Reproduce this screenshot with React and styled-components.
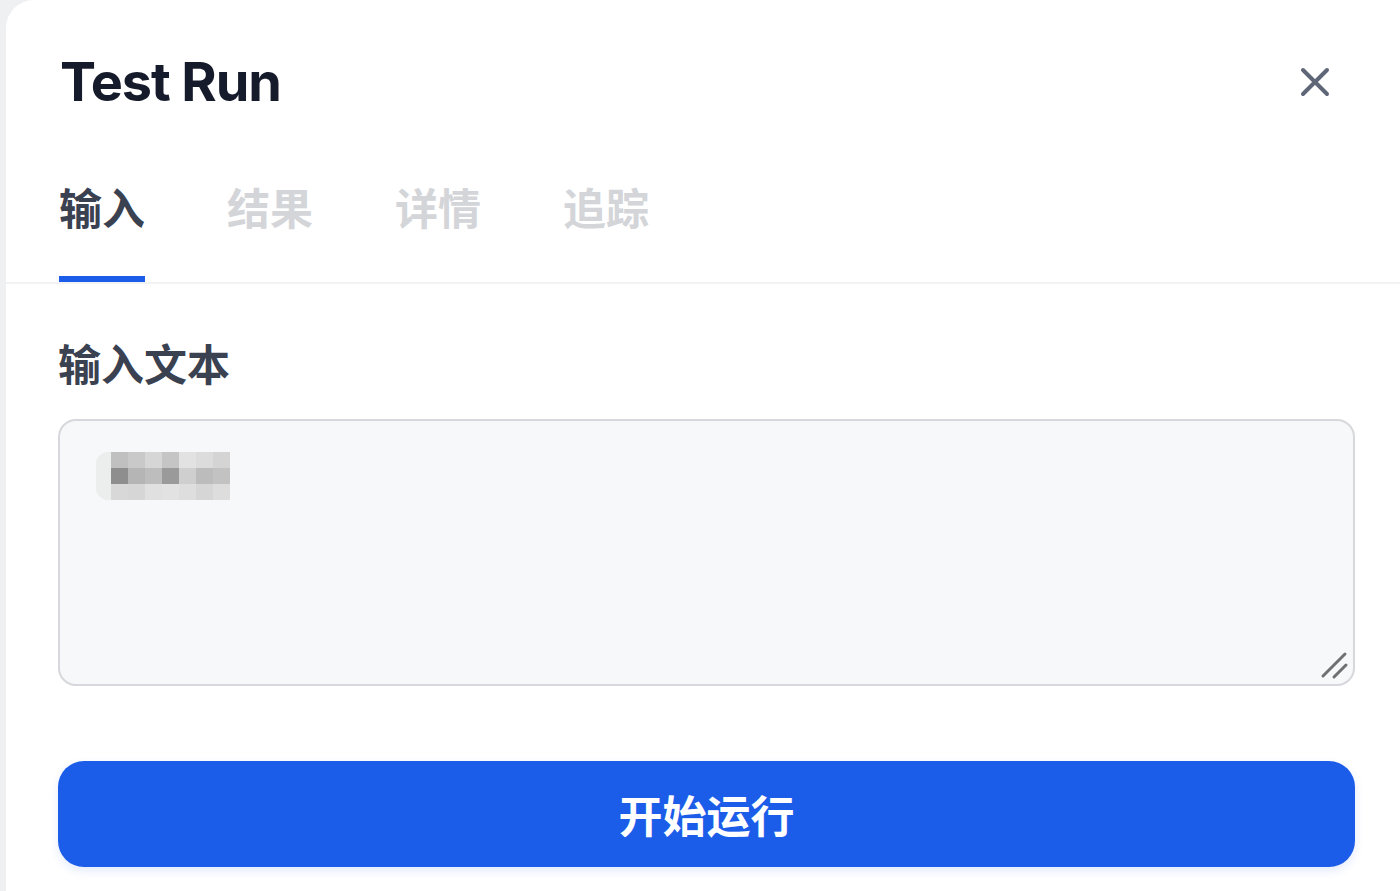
import React from "react";
import styled, { createGlobalStyle } from "styled-components";

const GlobalStyle = createGlobalStyle`
  html, body {
    margin: 0;
    padding: 0;
    background: #eef0f2;
  }
  * {
    box-sizing: border-box;
  }
`;

const Page = styled.div`
  display: flex;
  min-height: 100vh;
  padding-left: 6px;
  background: #eef0f2;
  overflow: hidden;
`;

const Panel = styled.div`
  flex: 1;
  display: flex;
  flex-direction: column;
  background: #ffffff;
  border-top-left-radius: 28px;
  font-family: Inter, "Noto Sans CJK SC", sans-serif;
`;

const Header = styled.div`
  display: flex;
  justify-content: space-between;
  align-items: center;
  padding: 48px 70px 0 54px;
`;

const Title = styled.h1`
  margin: 0;
  font-family: Inter, "Noto Sans CJK SC", sans-serif;
  font-size: 54px;
  line-height: 68px;
  font-weight: 700;
  color: #161b2b;
  letter-spacing: -1.1px;
`;

const CloseButton = styled.button`
  display: flex;
  align-items: center;
  justify-content: center;
  padding: 0;
  border: none;
  background: none;
  color: #5f6677;
  cursor: pointer;
`;

const TabBar = styled.div`
  display: flex;
  gap: 82px;
  padding: 0 53px;
  margin-top: 58px;
  border-bottom: 2px solid #f2f3f5;
`;

const Tab = styled.div`
  font-family: "Noto Sans CJK SC", sans-serif;
  font-size: 43px;
  line-height: 64px;
  font-weight: 700;
  color: ${(p) => (p.$active ? "#3a4150" : "#d3d5d9")};
  padding-bottom: 38px;
  border-bottom: 6px solid ${(p) => (p.$active ? "#1b5de9" : "transparent")};
`;

const Body = styled.div`
  display: flex;
  flex-direction: column;
  padding: 0 45px 0 52px;
`;

const Label = styled.div`
  margin-top: 46px;
  font-family: "Noto Sans CJK SC", sans-serif;
  font-size: 43px;
  line-height: 64px;
  font-weight: 700;
  color: #3a4150;
`;

const Field = styled.div`
  position: relative;
  margin-top: 25px;
  height: 267px;
  padding: 31px 36px;
  background: #f7f8f9;
  border: 2px solid #d6d8dc;
  border-radius: 18px;
`;

const Mosaic = styled.div`
  display: flex;
  align-items: center;
`;

const MosaicCap = styled.div`
  width: 15px;
  height: 48px;
  background: #eceded;
  border-radius: 12px 0 0 12px;
`;

const MosaicGrid = styled.div`
  display: grid;
  grid-template-columns: repeat(7, 17px);
  grid-auto-rows: 16px;
`;

const Cell = styled.div`
  background: ${(p) => p.$tone};
`;

const Grip = styled.svg`
  position: absolute;
  right: 4px;
  bottom: 4px;
`;

const RunButton = styled.button`
  margin-top: 75px;
  height: 106px;
  border: none;
  border-radius: 26px;
  background: #1b5de9;
  color: #ffffff;
  font-family: "Noto Sans CJK SC", sans-serif;
  font-size: 44px;
  font-weight: 700;
  box-shadow: 0 4px 10px rgba(27, 93, 233, 0.12);
  cursor: pointer;
`;

const tabs = ["输入", "结果", "详情", "追踪"];

const mosaic = [
  ["#c0c0c0", "#c9c9c9", "#d6d6d6", "#c5c5c5", "#e2e2e2", "#dcdcdc", "#d4d4d4"],
  ["#8e8e8e", "#b5b5b5", "#bdbdbd", "#9a9a9a", "#cfcfcf", "#bcbcbc", "#c2c2c2"],
  ["#d8d8d8", "#d6d6d6", "#e0e0e0", "#e2e2e2", "#dedede", "#d6d6d6", "#dddddd"],
];

export default function App() {
  return (
    <>
      <GlobalStyle />
      <Page>
        <Panel>
          <Header>
            <Title>Test Run</Title>
            <CloseButton aria-label="close">
              <svg width="30" height="30" viewBox="0 0 30 30" fill="none">
                <path
                  d="M3 3L27 27M27 3L3 27"
                  stroke="currentColor"
                  strokeWidth="4"
                  strokeLinecap="round"
                />
              </svg>
            </CloseButton>
          </Header>

          <TabBar>
            {tabs.map((t, i) => (
              <Tab key={t} $active={i === 0}>
                {t}
              </Tab>
            ))}
          </TabBar>

          <Body>
            <Label>输入文本</Label>
            <Field>
              <Mosaic>
                <MosaicCap />
                <MosaicGrid>
                  {mosaic.flat().map((c, i) => (
                    <Cell key={i} $tone={c} />
                  ))}
                </MosaicGrid>
              </Mosaic>
              <Grip width="30" height="30" viewBox="0 0 30 30" fill="none">
                <path d="M4 26L26 4M15 27L27 15" stroke="#707070" strokeWidth="3" strokeLinecap="round" />
              </Grip>
            </Field>
            <RunButton>开始运行</RunButton>
          </Body>
        </Panel>
      </Page>
    </>
  );
}
